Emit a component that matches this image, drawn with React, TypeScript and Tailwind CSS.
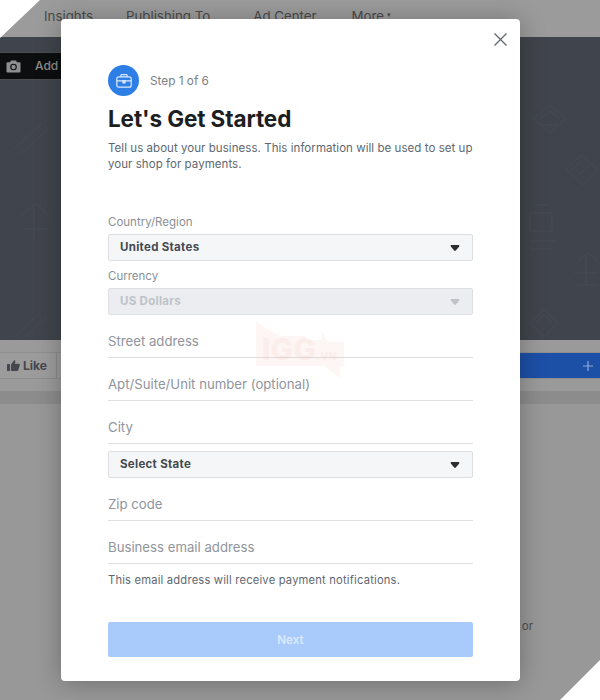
const font = { fontFamily: 'Inter, "Liberation Sans", sans-serif' };

function Caret({ className }: { className: string }) {
  return (
    <svg width="10" height="7" viewBox="0 0 10 7" className={className}>
      <path d="M0.6 0.8 C0.6 0.2 1 0 1.6 0 H8.4 C9 0 9.4 0.2 9.4 0.8 C9.4 1.4 9 1.8 8.6 2.2 L5.8 5.6 C5.3 6.2 4.7 6.2 4.2 5.6 L1.4 2.2 C1 1.8 0.6 1.4 0.6 0.8 Z" fill="currentColor" />
    </svg>
  );
}

function SelectBox({ label, disabled }: { label: string; disabled?: boolean }) {
  return (
    <div
      className={`h-[27px] pl-[11px] pr-[12px] pt-px flex items-center justify-between rounded-[2px] border border-[#dddfe2] text-[11.5px] font-bold tracking-[0.3px] ${
        disabled ? 'bg-[#ebedf0] text-[#bec3c9]' : 'bg-[#f5f6f7] text-[#444950]'
      }`}
    >
      <span>{label}</span>
      <Caret className={disabled ? 'text-[#bec3c9]' : 'text-[#2b2d31]'} />
    </div>
  );
}

function TextRow({ label }: { label: string }) {
  return (
    <div className="h-[43px] flex items-end pb-[5px] border-b border-[#dddfe2] text-[13.2px] text-[#90949c]">
      {label}
    </div>
  );
}

// faint pattern printed on the cover photo, only visible either side of the modal
function CoverDoodles() {
  return (
    <svg width="600" height="303" viewBox="0 0 600 303" className="absolute left-0 top-[37px]" fill="none" stroke="#464a52" strokeWidth="1">
      <path d="M534 82 l16 -14 l16 14 l-16 14z M540 82 l10 -8 l10 8 M542 88 h16" />
      <path d="M566 132 l15 -14 l17 14 l-15 16z M572 132 l10 -8 M578 138 l10 -8" />
      <path d="M530 176 h22 v18 h-22z M530 204 h26 M530 212 h22 M534 168 h14" />
      <path d="M578 224 l10 -8 l10 8 M574 236 h24 M578 248 h20 M586 216 v32" />
      <path d="M530 286 l14 -14 l14 14 l-14 14z M536 286 l8 -8 l8 8" />
      <path d="M14 112 l28 -26 M20 118 l28 -26" />
      <path d="M20 180 l16 -14 l14 14 M22 192 h26 M34 166 v36" />
      <path d="M14 300 l26 -24 M22 303 l26 -24" />
    </svg>
  );
}

function Background() {
  return (
    <div className="h-[700px] w-[600px] overflow-hidden bg-[#979797] flex flex-col">
      <div className="h-[37px] flex pl-[44px] text-[13.3px] text-[#4a4a4a] overflow-hidden pt-[7px] bg-[#9b9b9b]">
        <span>Insights</span>
        <span className="ml-[33px]">Publishing To</span>
        <span className="ml-[43px]">Ad Center</span>
        <span className="ml-[35px]">More</span>
        <span className="ml-[3px] mt-[3px] text-[7px]">▾</span>
      </div>
      <div className="h-[303px] bg-[#40444c] pt-[15px]">
        <div className="w-[70px] h-[28px] bg-[#0d0e10] border-y border-[#4a4d52] flex items-center pl-[6px] gap-[14px] text-[12px] font-medium text-[#8e8e8e]">
          <svg width="15" height="13" viewBox="0 0 15 13" fill="#8f8f8f">
            <path d="M5 0.5h5l1 1.8h2.5a1 1 0 0 1 1 1v8.2a1 1 0 0 1-1 1h-12a1 1 0 0 1-1-1V3.300a1 1 0 0 1 1-1H4z" />
            <circle cx="7.500" cy="7" r="3.300" fill="#0d0e10" />
            <circle cx="7.500" cy="7" r="2.200" />
          </svg>
          <span>Add</span>
        </div>
      </div>
      <div className="h-[12px] bg-[#9a9a9a]" />
      <div className="h-[27px] flex border-y border-[#8f8f8f] bg-[#9c9c9c]">
        <div className="w-[57px] border-r border-[#8c8c8c] flex items-center pl-[7px] gap-[3px] text-[12px] font-bold text-[#44474d]">
          <svg width="13" height="11" viewBox="0 0 13 11" fill="#44474d">
            <rect x="0" y="4" width="3" height="7" rx="0.500" />
            <path d="M4 4.500 7 0.500c1-0.500 1.500 0.500 1.300 1.300L7.900 3.800h3.800c1 0 1.300 1 1 1.700l-1.500 4.700c-0.200 0.500-0.500 0.800-1 0.800H4z" />
          </svg>
          <span>Like</span>
        </div>
        <div className="flex-1 flex items-center justify-end bg-[#1c4fa6] ml-[300px] pr-[7px]">
          <svg width="10" height="10" viewBox="0 0 10 10" stroke="#8fa9d6" strokeWidth="1.200">
            <path d="M5 0v10M0 5h10" />
          </svg>
        </div>
      </div>
      <div className="h-[12px] bg-[#9a9a9a]" />
      <div className="h-[13px] bg-[#8c8c8c]" />
      <div className="flex-1 bg-[#989898] flex justify-end">
        <span className="mt-[214px] mr-[67px] text-[11.5px] text-[#4d4d4d]">or</span>
      </div>
    </div>
  );
}

export default function App() {
  return (
    <div className="relative h-[700px] w-[600px] overflow-hidden" style={font}>
      <Background />
      <CoverDoodles />

      {/* page corners */}
      <svg width="40" height="38" viewBox="0 0 40 38" className="absolute left-0 top-0">
        <path d="M0 0h40L0 38z" fill="#fff" />
      </svg>
      <svg width="40" height="40" viewBox="0 0 40 40" className="absolute right-0 bottom-0">
        <path d="M40 0v40H0z" fill="#fff" />
      </svg>

      <div className="absolute left-[61px] top-[19px] w-[459px] h-[662px] bg-white rounded-[4px] shadow-[0_2px_26px_rgba(0,0,0,0.28)] px-[47px] pt-[46px]">
        <button className="absolute right-[13px] top-[14px] text-[#606770]">
          <svg width="13" height="13" viewBox="0 0 13 13" stroke="currentColor" strokeWidth="1.300">
            <path d="M0.500 0.500 12.500 12.500M12.500 0.500 0.500 12.500" />
          </svg>
        </button>

        <div className="flex items-center gap-[11px]">
          <div className="w-[31px] h-[31px] rounded-full bg-[#2d7fe6] flex items-center justify-center">
            <svg width="16" height="14" viewBox="0 0 16 14" fill="none" stroke="#dcebfc" strokeWidth="1.200">
              <rect x="0.800" y="2.800" width="14.400" height="10.400" rx="2" />
              <path d="M0.800 6.800h14.400M4.500 2.800 5 1.200c.1-.3.300-.5.600-.5h4.800c.3 0 .5.200.6.500l.5 1.600" />
              <path d="M7 6.800h2v2h-2z" fill="#dcebfc" />
            </svg>
          </div>
          <span className="mt-[2px] text-[11.8px] text-[#7b8087]">Step 1 of 6</span>
        </div>

        <h1 className="mt-[8px] text-[22.5px] leading-[30px] font-bold tracking-[-0.1px] text-[#1c1e21]">Let's Get Started</h1>
        <p className="mt-[6px] text-[11.5px] leading-[16px] tracking-[0.05px] text-[#606770]">
          Tell us about your business. This information will be used to set up your shop for payments.
        </p>

        <div className="mt-[42px] text-[11.5px] leading-[16px] text-[#8b8f96]">Country/Region</div>
        <div className="mt-[4px]"><SelectBox label="United States" /></div>
        <div className="mt-[7px] text-[11.5px] leading-[16px] text-[#8b8f96]">Currency</div>
        <div className="mt-[4px]"><SelectBox label="US Dollars" disabled /></div>

        <TextRow label="Street address" />
        <TextRow label="Apt/Suite/Unit number (optional)" />
        <TextRow label="City" />
        <div className="mt-[7px]"><SelectBox label="Select State" /></div>
        <TextRow label="Zip code" />
        <TextRow label="Business email address" />

        <p className="mt-[9px] text-[11.2px] leading-[14px] tracking-[0.19px] text-[#606770]">
          This email address will receive payment notifications.
        </p>
        <button className="mt-[35px] pt-[3px] w-full h-[35px] rounded-[2px] bg-[#a9cbfb] text-[11.5px] font-semibold tracking-[0.1px] text-[#dbe9fd]">Next</button>

        {/* faint watermark across the form */}
        <svg width="88" height="56" viewBox="0 0 88 56" className="absolute left-[195px] top-[303px] pointer-events-none">
          <path d="M0 0 L24 14 H50 V44 H0z M50 18 H66 V10 L72 20 H88 V44 H84 V56 L68 44 H50z" fill="#f5c6bd" opacity="0.16" />
          <text x="6" y="38" fontSize="30" fontWeight="800" fill="#f0a99b" opacity="0.1">IGG</text>
          <text x="60" y="38" fontSize="11" fontWeight="800" fill="#f0a99b" opacity="0.1">.VN</text>
        </svg>
      </div>
    </div>
  );
}
